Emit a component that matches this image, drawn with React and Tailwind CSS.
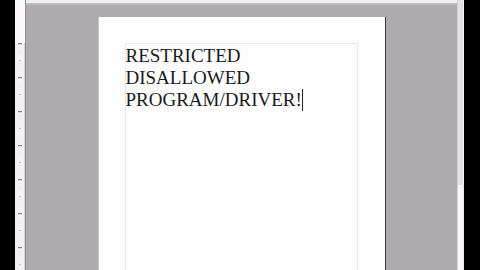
import React from 'react';

// left vertical ruler, drawn as svg ticks
const Ruler = () => {
  const major = [43, 77, 111, 145, 179, 213, 247];
  return (
    <div className="w-[10px] h-full bg-[#f3f1f5] border-r border-[#d8d4da]">
      <svg width="10" height="270" viewBox="0 0 10 270">
        <rect x="0" y="0" width="10" height="43" fill="#fbfafc" />
        {major.map((y) => (
          <rect key={y} x="3" y={y} width="4" height="1.2" fill="#8a878c" />
        ))}
        {major.map((y) => (
          <rect key={'m' + y} x="4" y={y + 17} width="2" height="1" fill="#c4c0c6" />
        ))}
        {major.map((y) => (
          <rect key={'s' + y} x="4.5" y={y + 8.5} width="1" height="1" fill="#dcd8de" />
        ))}
      </svg>
    </div>
  );
};

export default function App() {
  return (
    <div className="w-[480px] h-[270px] flex overflow-hidden bg-black">
      <div className="w-[15px] shrink-0 bg-black" />
      <Ruler />
      {/* document area */}
      <div className="w-[432px] shrink-0 flex flex-col bg-[#aeaaaf] border-l border-[#8e8a90]">
        <div className="h-[3px] bg-[#f0edf1]" />
        <div className="h-[2px] bg-[#bdb9be]" />
        <div className="flex-1 flex justify-center pt-[12px] overflow-hidden">
          <div className="w-[288px] shrink-0 bg-[#fefdfe] border-l border-[#c9c5ca] border-r border-r-[#3a383b] pt-[26px] pl-[26px] pr-[27px]">
            <div className="h-[260px] border-t border-l border-r border-[#ece7ee] pt-[1px]">
              <p className="text-[19px] leading-[22px] text-[#1a1a1a] font-['Liberation_Serif','Times_New_Roman',serif]">
                RESTRICTED
                <br />
                DISALLOWED
                <br />
                PROGRAM/DRIVER!
                <span className="inline-block w-px h-[22px] bg-[#2a2a2a] align-[-5px]" />
              </p>
            </div>
          </div>
        </div>
      </div>
      {/* scrollbar strip */}
      <div className="w-[7px] shrink-0 flex flex-col border-l border-[#d6d2d8]">
        <div className="h-[185px] bg-[#e4e0e6] border-r border-[#f6f4f7]" />
        <div className="flex-1 bg-[#f8f6f9] border-r border-[#ece8ee]" />
      </div>
      <div className="flex-1 bg-black" />
    </div>
  );
}
